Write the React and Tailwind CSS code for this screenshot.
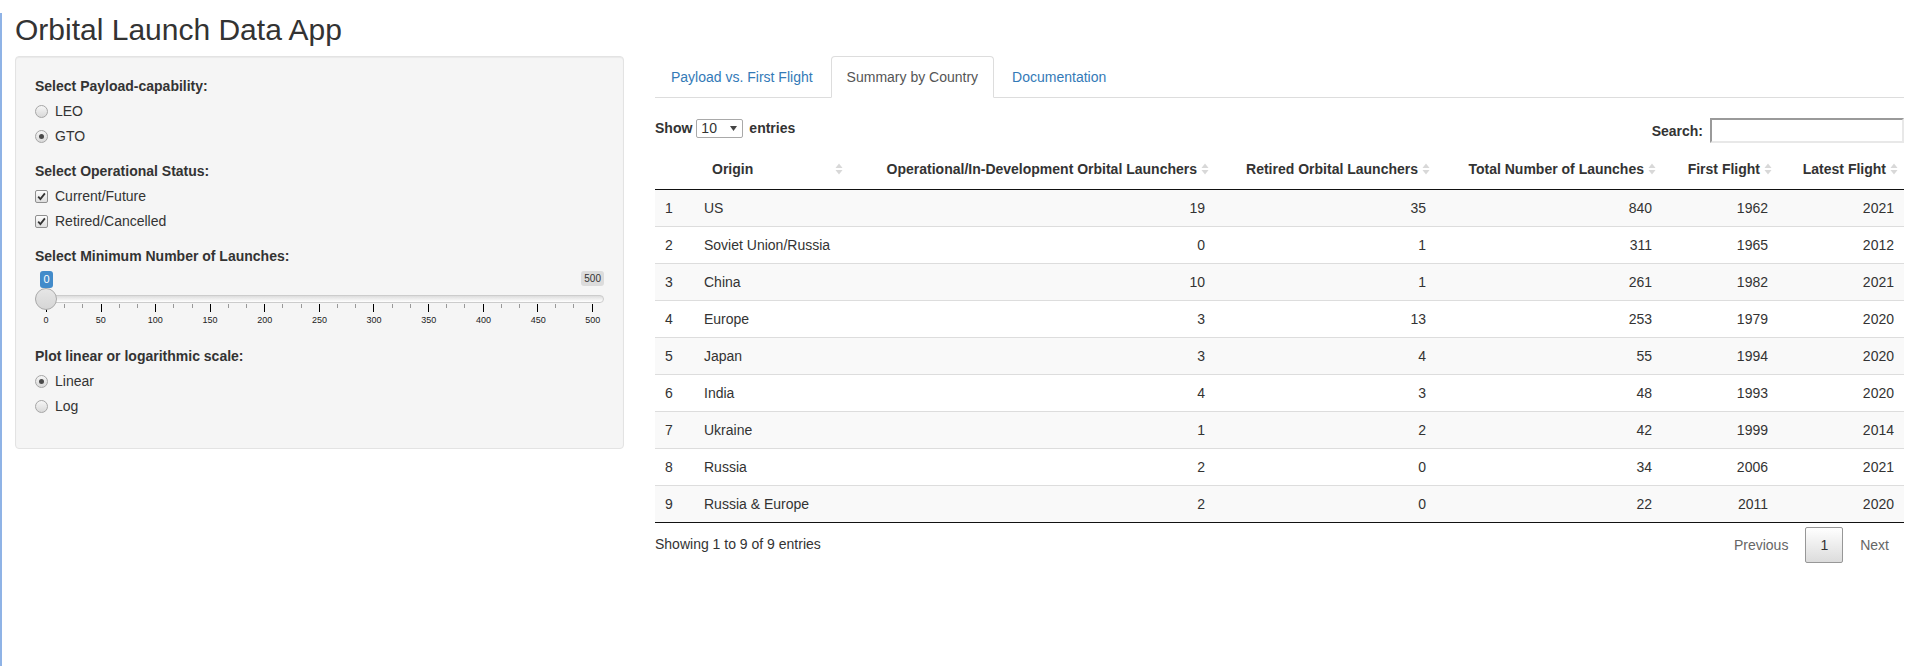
import React from 'react';

const rows = [
  [1, 'US', 19, 35, 840, 1962, 2021],
  [2, 'Soviet Union/Russia', 0, 1, 311, 1965, 2012],
  [3, 'China', 10, 1, 261, 1982, 2021],
  [4, 'Europe', 3, 13, 253, 1979, 2020],
  [5, 'Japan', 3, 4, 55, 1994, 2020],
  [6, 'India', 4, 3, 48, 1993, 2020],
  [7, 'Ukraine', 1, 2, 42, 1999, 2014],
  [8, 'Russia', 2, 0, 34, 2006, 2021],
  [9, 'Russia & Europe', 2, 0, 22, 2011, 2020],
];

const columns = [
  { label: '', width: 'w-[39px]' },
  { label: 'Origin', width: 'w-[155px]' },
  { label: 'Operational/In-Development Orbital Launchers', width: 'w-[366px]' },
  { label: 'Retired Orbital Launchers', width: 'w-[221px]' },
  { label: 'Total Number of Launches', width: 'w-[226px]' },
  { label: 'First Flight', width: 'w-[116px]' },
  { label: 'Latest Flight', width: 'w-[126px]' },
];

const ticks = Array.from({ length: 31 }, (_, i) => i);
const tickLabels = [0, 50, 100, 150, 200, 250, 300, 350, 400, 450, 500];

const SortIcon = () => (
  <svg width="8" height="14" viewBox="0 0 8 14" className="shrink-0">
    <path d="M0.5 6 L4 1.5 L7.5 6 Z" fill="#d8d8d8" />
    <path d="M0.5 8 L7.5 8 L4 12.5 Z" fill="#d8d8d8" />
  </svg>
);

const Radio = ({ checked, label }) => (
  <div className="flex items-start h-[20px]">
    <span className="mt-[4px] mr-[7px] w-[13px] h-[13px] shrink-0 rounded-full border border-[#a6a6a6] bg-linear-to-b from-[#f6f6f6] to-[#d9d9d9] flex items-center justify-center">
      {checked && <span className="w-[5px] h-[5px] rounded-full bg-[#4a4a4a]" />}
    </span>
    <span>{label}</span>
  </div>
);

const Checkbox = ({ label }) => (
  <div className="flex items-start h-[20px]">
    <span className="mt-[4px] mr-[7px] w-[13px] h-[13px] shrink-0 rounded-[2px] border border-[#8f8f8f] bg-linear-to-b from-[#fdfdfd] to-[#dedede] flex items-center justify-center">
      <svg width="9" height="9" viewBox="0 0 9 9">
        <path d="M1.2 4.6 L3.4 7 L7.9 1.4" fill="none" stroke="#333" strokeWidth="1.8" />
      </svg>
    </span>
    <span>{label}</span>
  </div>
);

const Slider = () => (
  <div className="h-[60px]">
    <div className="flex justify-between items-start h-[17px] pl-[5px]">
      <span className="bg-[#428bca] text-white text-[11px] leading-[15px] px-[3.5px] py-px rounded-[3px]">0</span>
      <span className="bg-[#dcdcdc] text-[#333] text-[10px] leading-[13px] px-[3px] py-px rounded-[3px]">500</span>
    </div>
    <div className="relative h-[16px] pt-[7px]">
      <div className="h-[8px] rounded-full border border-[#cccccc] bg-linear-to-b from-[#dddddd] to-white" />
      <span className="absolute left-0 top-0 w-[22px] h-[22px] rounded-full border border-[#aaaaaa] bg-linear-to-b from-[#e6e6e6] to-[#d6d6d6]" />
    </div>
    <div className="flex justify-between items-start px-[11px] h-[8px]">
      {ticks.map((i) => (
        <span key={i} className={i % 3 === 0 ? 'w-px h-[8px] bg-black' : 'w-px h-[4px] bg-[#999]'} />
      ))}
    </div>
    <div className="flex justify-between px-[11px] pt-[3px]">
      {tickLabels.map((v) => (
        <span key={v} className="w-0 flex justify-center text-[9px] leading-[10px] text-[#222]">
          {v}
        </span>
      ))}
    </div>
  </div>
);

const Sidebar = () => (
  <div className="w-[609px] shrink-0 bg-[#f5f5f5] border border-[#e3e3e3] rounded-[4px] p-[19px] pb-[18px] shadow-[inset_0_1px_1px_rgba(0,0,0,0.05)]">
    <div className="mb-[15px]">
      <div className="font-bold mb-[5px]">Select Payload-capability:</div>
      <div className="flex flex-col gap-[5px]">
        <Radio label="LEO" />
        <Radio label="GTO" checked />
      </div>
    </div>
    <div className="mb-[15px]">
      <div className="font-bold mb-[5px]">Select Operational Status:</div>
      <div className="flex flex-col gap-[5px]">
        <Checkbox label="Current/Future" />
        <Checkbox label="Retired/Cancelled" />
      </div>
    </div>
    <div className="mb-[15px]">
      <div className="font-bold mb-[5px]">Select Minimum Number of Launches:</div>
      <Slider />
    </div>
    <div className="mb-[14px]">
      <div className="font-bold mb-[5px]">Plot linear or logarithmic scale:</div>
      <div className="flex flex-col gap-[5px]">
        <Radio label="Linear" checked />
        <Radio label="Log" />
      </div>
    </div>
  </div>
);

const Tabs = () => (
  <div className="flex items-start border-b border-[#dddddd]">
    <span className="mr-[2px] -mb-px px-[15px] py-[10px] border border-transparent rounded-t-[4px] text-[#337ab7]">
      Payload vs. First Flight
    </span>
    <span className="mr-[2px] -mb-px px-[15px] py-[10px] border border-[#dddddd] border-b-transparent rounded-t-[4px] bg-white text-[#555]">
      Summary by Country
    </span>
    <span className="mr-[2px] -mb-px px-[15px] py-[10px] border border-transparent rounded-t-[4px] text-[#337ab7]">
      Documentation
    </span>
  </div>
);

const DataTable = () => (
  <div>
    <div className="flex justify-between items-start mt-[20px]">
      <div className="flex items-center h-[20px] font-bold">
        <span>Show</span>
        <span className="ml-[4px] mr-[6px] flex items-center justify-between h-[19px] w-[47px] border border-[#a9a9a9] rounded-[2px] bg-white pl-[4px] pr-[5px] font-normal">
          <span>10</span>
          <svg width="7" height="5" viewBox="0 0 7 5">
            <path d="M0 0 L7 0 L3.5 5 Z" fill="#444" />
          </svg>
        </span>
        <span>entries</span>
      </div>
      <div className="flex items-center font-bold">
        <span>Search:</span>
        <input
          type="text"
          readOnly
          className="ml-[7px] w-[194px] h-[25px] border-2 border-t-[#9a9a9a] border-l-[#9a9a9a] border-b-[#e8e8e8] border-r-[#e8e8e8] bg-white outline-none"
        />
      </div>
    </div>

    <table className="mt-[6px] w-[1249px] table-fixed border-separate border-spacing-0">
      <thead>
        <tr>
          {columns.map((c, i) => (
            <th
              key={i}
              className={`${c.width} py-[10px] pl-[18px] ${i === 0 ? 'pr-[18px]' : 'pr-[6px]'} border-b border-[#111] font-bold whitespace-nowrap`}
            >
              {i === 0 ? null : i === 1 ? (
                <div className="flex items-center justify-between">
                  <span>{c.label}</span>
                  <SortIcon />
                </div>
              ) : (
                <div className="flex items-center justify-end gap-[4px]">
                  <span>{c.label}</span>
                  <SortIcon />
                </div>
              )}
            </th>
          ))}
        </tr>
      </thead>
      <tbody>
        {rows.map((r, ri) => (
          <tr key={ri} className={ri % 2 === 0 ? 'bg-[#f9f9f9]' : 'bg-white'}>
            {r.map((v, ci) => (
              <td
                key={ci}
                className={`py-[8px] px-[10px] whitespace-nowrap ${ci > 1 ? 'text-right' : 'text-left'} ${
                  ri > 0 ? 'border-t border-[#dddddd]' : ''
                } ${ri === rows.length - 1 ? 'border-b border-b-[#111]' : ''}`}
              >
                {v}
              </td>
            ))}
          </tr>
        ))}
      </tbody>
    </table>

    <div className="flex justify-between items-start">
      <div className="pt-[11px]">Showing 1 to 9 of 9 entries</div>
      <div className="pt-[4px] flex items-start">
        <span className="px-[14px] py-[7px] border border-transparent text-[#666]">Previous</span>
        <span className="ml-[2px] px-[14px] py-[7px] border border-[#979797] rounded-[2px] bg-linear-to-b from-white to-[#dcdcdc] text-[#333]">
          1
        </span>
        <span className="ml-[2px] px-[14px] py-[7px] border border-transparent text-[#666]">Next</span>
      </div>
    </div>
  </div>
);

export default function App() {
  return (
    <div className="min-h-[666px] border-l-2 border-[#8fb3e6] pl-[13px] bg-white text-[#333] text-[14px] leading-[20px] font-['Liberation_Sans',Arial,sans-serif]">
      <h2 className="text-[30px] leading-[33px] mt-[13px] mb-[10px] font-medium">Orbital Launch Data App</h2>
      <div className="flex items-start gap-[31px]">
        <Sidebar />
        <div className="w-[1249px] shrink-0">
          <Tabs />
          <DataTable />
        </div>
      </div>
    </div>
  );
}
